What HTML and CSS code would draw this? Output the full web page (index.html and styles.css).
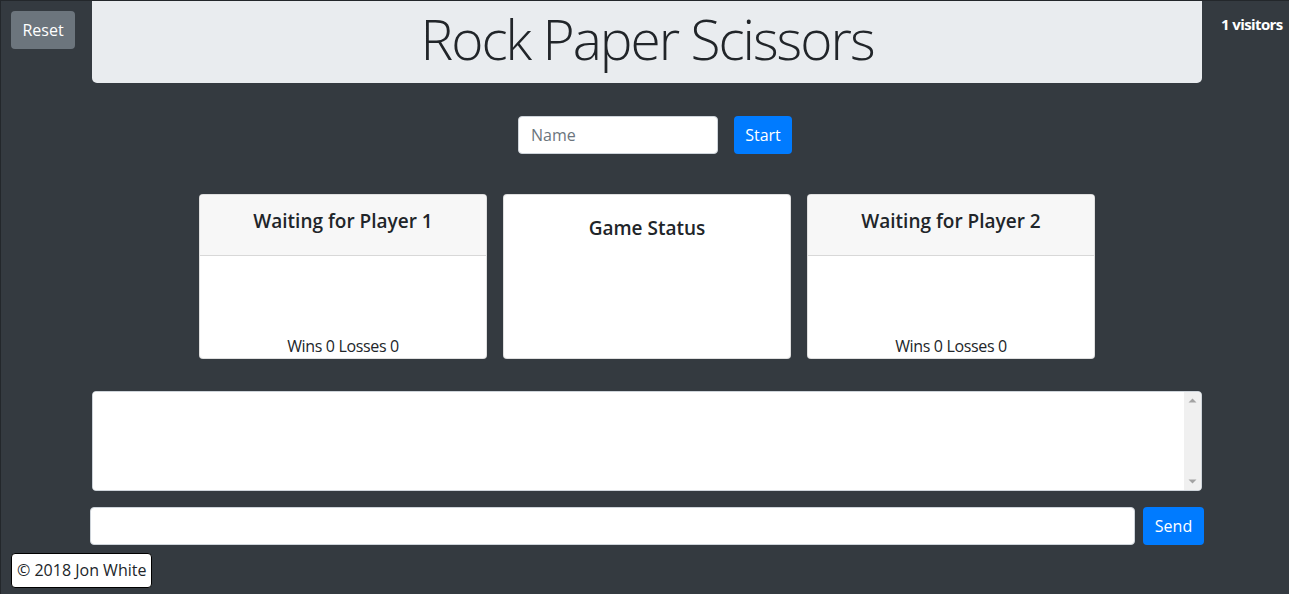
FILE: index.html
```html
<!DOCTYPE html>
<html lang="en">
<head>
<meta charset="utf-8">
<title>Rock Paper Scissors</title>
<link rel="stylesheet" href="styles.css">
</head>
<body>
<div class="page">
  <header class="top">
    <div class="top-left"><button class="btn btn-gray">Reset</button></div>
    <div class="jumbo"><h1 class="title">Rock Paper Scissors</h1></div>
    <div class="visitors">1 visitors</div>
  </header>

  <section class="join">
    <input class="field name" type="text" placeholder="Name">
    <button class="btn btn-blue start">Start</button>
  </section>

  <section class="cards">
    <div class="card">
      <div class="card-header"><h5 class="card-title">Waiting for Player 1</h5></div>
      <div class="card-body"><p class="score">Wins 0 Losses 0</p></div>
    </div>
    <div class="card status">
      <h5 class="card-title">Game Status</h5>
    </div>
    <div class="card">
      <div class="card-header"><h5 class="card-title">Waiting for Player 2</h5></div>
      <div class="card-body"><p class="score">Wins 0 Losses 0</p></div>
    </div>
  </section>

  <section class="chat">
    <div class="log-wrap">
      <textarea class="log" readonly></textarea>
      <div class="scrollbar">
        <svg class="arrow" width="17" height="17" viewBox="0 0 17 17"><path d="M4.5 10.5 L8.5 6.5 L12.5 10.5 Z" fill="#a3a3a3"/></svg>
        <svg class="arrow" width="17" height="17" viewBox="0 0 17 17"><path d="M4.5 6.5 L8.5 10.5 L12.5 6.5 Z" fill="#a3a3a3"/></svg>
      </div>
    </div>
    <div class="send-row">
      <input class="field msg" type="text">
      <button class="btn btn-blue send">Send</button>
    </div>
  </section>

  <footer class="credit">© 2018 Jon White</footer>
</div>
</body>
</html>
```

FILE: styles.css
```css
* { box-sizing: border-box; }

html, body {
  margin: 0;
  background: #343a40;
}

body {
  font-family: "Open Sans", "Noto Sans", "DejaVu Sans", sans-serif;
  font-size: 16px;
  color: #212529;
}

.page {
  width: 1289px;
  height: 594px;
  border-top: 1px solid #23272b;
  border-left: 1px solid #23272b;
}

.top {
  display: grid;
  grid-template-columns: 91px 1110px 1fr;
  align-items: start;
}

.top-left {
  padding: 10px 0 0 10px;
}

.btn {
  border: 0;
  border-radius: 4px;
  color: #fff;
  font-family: inherit;
  font-size: 16px;
  line-height: 24px;
  height: 38px;
  padding: 0;
  cursor: pointer;
}

.btn-gray { background: #6c757d; width: 64px; }
.btn-blue { background: #007bff; }

.jumbo {
  background: #e9ecef;
  border-radius: 0 0 5px 5px;
  height: 82px;
  display: flex;
  justify-content: center;
}

.title {
  margin: -4px 0 0;
  font-weight: 300;
  font-size: 55px;
  letter-spacing: -2px;
  line-height: 84px;
  color: #212529;
}

.visitors {
  color: #fff;
  font-weight: 700;
  font-size: 15px;
  letter-spacing: -0.6px;
  line-height: 24px;
  padding: 11px 0 0 19px;
  white-space: nowrap;
}

.join {
  display: flex;
  gap: 16px;
  padding: 33px 0 0 517px;
}

.field {
  border: 1px solid #ced4da;
  border-radius: 4px;
  background: #fff;
  height: 38px;
  font-family: inherit;
  font-size: 16px;
  padding: 6px 12px;
  color: #495057;
}

.field::placeholder { color: #6c757d; }

.name { width: 200px; }
.start { width: 58px; }

.cards {
  display: flex;
  gap: 16px;
  padding: 40px 0 0 198px;
}

.card {
  width: 288px;
  height: 165px;
  background: #fff;
  border: 1px solid rgba(0,0,0,.125);
  border-radius: 4px;
  display: flex;
  flex-direction: column;
  overflow: hidden;
}

.card-header {
  height: 61px;
  background: #f7f7f7;
  border-bottom: 1px solid rgba(0,0,0,.125);
  padding-top: 14px;
}

.card-title {
  margin: 0;
  font-size: 19px;
  font-weight: 600;
  line-height: 24px;
  text-align: center;
}

.card-body {
  flex: 1;
  display: flex;
  align-items: flex-end;
  justify-content: center;
}

.score {
  margin: 0 0 3px;
  line-height: 18px;
  letter-spacing: -0.35px;
}

.status .card-title {
  padding-top: 21px;
}

.chat {
  padding: 32px 0 0 0;
}

.log-wrap {
  display: flex;
  margin-left: 91px;
  width: 1110px;
  height: 100px;
  border: 1px solid #ced4da;
  border-radius: 4px;
  background: #fff;
  overflow: hidden;
}

.log {
  flex: 1;
  border: 0;
  outline: 0;
  resize: none;
  background: #fff;
}

.scrollbar {
  width: 17px;
  background: #f0f0f0;
  display: flex;
  flex-direction: column;
  justify-content: space-between;
}

.arrow { display: block; }

.send-row {
  display: flex;
  gap: 8px;
  padding: 16px 0 0 89px;
}

.msg { width: 1045px; }
.send { width: 61px; }

.credit {
  display: inline-block;
  margin: 8px 0 0 10px;
  background: #fff;
  border: 1px solid #000;
  border-radius: 4px;
  padding: 4px 5px;
  line-height: 25px;
  color: #212529;
}
```
